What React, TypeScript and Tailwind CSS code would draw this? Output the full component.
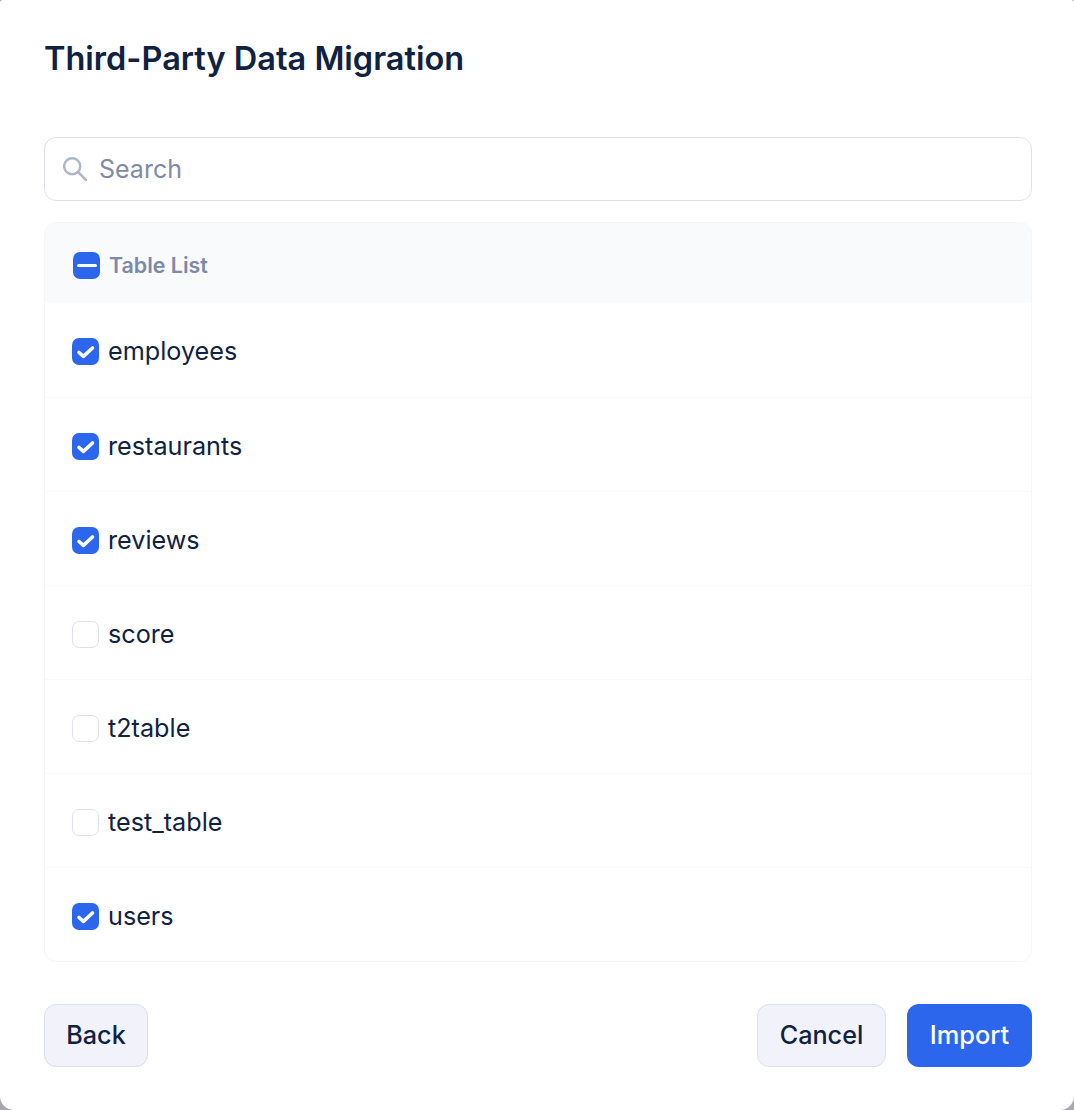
const tables = [
  { name: 'employees', checked: true },
  { name: 'restaurants', checked: true },
  { name: 'reviews', checked: true },
  { name: 'score', checked: false },
  { name: 't2table', checked: false },
  { name: 'test_table', checked: false },
  { name: 'users', checked: true },
];

export default function App() {
  return (
    <div className="h-[1110px] w-[1074px] bg-[#a8a8ad]">
      <div className="h-full rounded-t-[3px] rounded-b-[14px] bg-white pl-[44px] pr-[42px] font-['Inter',sans-serif] text-[#0f2242]">
        <h1 className="pt-[38px] text-[32.5px] font-semibold leading-[41px]">Third-Party Data Migration</h1>

        <div className="mt-[58px] flex h-[64px] items-center rounded-[12px] border border-[#dfe2ea] pl-[18px]">
          <svg viewBox="0 0 24 24" className="h-[24px] w-[24px]" fill="none" stroke="#b0b7c8" strokeWidth={2.5} strokeLinecap="round">
            <circle cx="9.2" cy="9.2" r="8" />
            <path d="M15.2 15.2L23 23" />
          </svg>
          <span className="ml-[12px] pt-[2px] text-[25px] text-[#7f8ba5]">Search</span>
        </div>

        <div className="mt-[21px] overflow-hidden rounded-[12px] border border-[#f5f6f8]">
          <div className="flex h-[80px] items-center bg-[#f9fafc] pl-[28px] pt-[5px]">
            <div className="flex h-[27px] w-[27px] items-center justify-center rounded-[7px] bg-[#2b66ec]">
              <div className="h-[3px] w-[20px] rounded-full bg-white" />
            </div>
            <span className="ml-[9px] text-[21.4px] font-semibold text-[#7d89a6]">Table List</span>
          </div>
          {tables.map((t, i) => (
            <div
              key={t.name}
              className={`flex h-[94px] items-center pl-[27px] pt-[3px] ${i > 0 ? 'border-t border-[#f8f9fa]' : ''}`}
            >
              {t.checked ? (
                <div className="h-[27px] w-[27px] rounded-[7px] bg-[#2b66ec]">
                  <svg viewBox="0 0 27 27" className="h-[27px] w-[27px]" fill="none" stroke="white" strokeWidth={3.6} strokeLinecap="round" strokeLinejoin="round">
                    <path d="M7 14.5l4.4 3.8L20.5 10" />
                  </svg>
                </div>
              ) : (
                <div className="h-[27px] w-[27px] rounded-[7px] border border-[#dfe2ea] bg-white" />
              )}
              <span className={`ml-[9px] text-[25.2px] ${i > 0 ? 'pt-[2px]' : ''}`}>{t.name}</span>
            </div>
          ))}
        </div>

        <div className="mt-[42px] flex items-center justify-between">
          <button className="h-[63px] w-[104px] rounded-[12px] border border-[#dcdfec] bg-[#f1f2fa] text-[25.2px] font-medium">Back</button>
          <div className="flex gap-[21px]">
            <button className="h-[63px] w-[129px] rounded-[12px] border border-[#dcdfec] bg-[#f1f2fa] text-[25.2px] font-medium">Cancel</button>
            <button className="h-[63px] w-[125px] rounded-[12px] bg-[#2b66ec] text-[25.4px] font-medium text-white">Import</button>
          </div>
        </div>
      </div>
    </div>
  );
}
